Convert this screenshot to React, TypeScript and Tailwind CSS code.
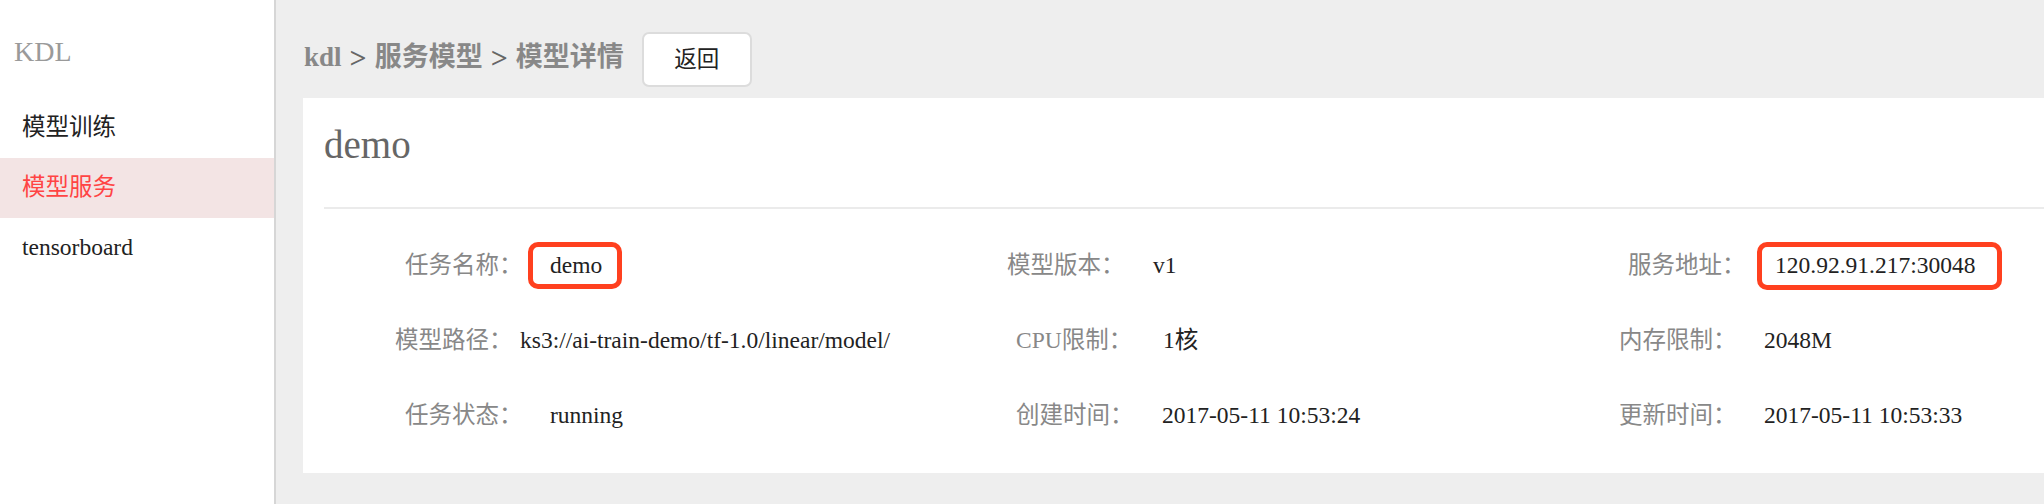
import React from "react";

const FONT = '"Liberation Serif", "Noto Sans CJK SC", serif';

type CellProps = {
  cellClass: string;
  labelClass: string;
  label: string;
  value: string;
  boxClass?: string;
};

function Cell({ cellClass, labelClass, label, value, boxClass }: CellProps) {
  return (
    <div className={cellClass}>
      <span className={labelClass}>{label}</span>
      {boxClass ? (
        <span className={boxClass}>{value}</span>
      ) : (
        <span className="text-[#222] whitespace-nowrap">{value}</span>
      )}
    </div>
  );
}

export default function App() {
  return (
    <div
      className="flex w-[2044px] h-[504px] overflow-hidden bg-[#eeeeee]"
      style={{ fontFamily: FONT }}
    >
      {/* Sidebar */}
      <aside className="w-[276px] shrink-0 h-full bg-white border-r-2 border-[#d6d6d6]">
        <div className="pt-[38px] pl-[14px] text-[28px] leading-none text-[#9a9a9a]">KDL</div>
        <nav className="mt-[32px] text-[23.5px]">
          <div className="h-[60px] flex items-center pl-[22px] text-[#222]">模型训练</div>
          <div className="h-[60px] flex items-center pl-[22px] bg-[#f3e4e4] text-[#ff4444]">模型服务</div>
          <div className="h-[60px] flex items-center pl-[22px] text-[#222]">tensorboard</div>
        </nav>
      </aside>

      {/* Main */}
      <main className="flex-1 min-w-0 pt-[32px] pl-[27px]">
        <div className="flex items-center h-[55px]">
          <div className="ml-[1px] -mt-[5px] flex items-center text-[27px] font-bold text-[#888] whitespace-nowrap">
            <span>kdl</span>
            <span className="mx-[8px] text-[30px] text-[#666]">&gt;</span>
            <span>服务模型</span>
            <span className="mx-[8px] text-[30px] text-[#666]">&gt;</span>
            <span>模型详情</span>
          </div>
          <button className="ml-[18px] w-[110px] h-[55px] bg-white border-2 border-[#dcdcdc] rounded-[7px] text-[22.5px] text-[#222] flex items-center justify-center">
            返回
          </button>
        </div>

        <section className="mt-[11px] bg-white h-[375px]">
          <div className="pl-[21px] pt-[27px] pb-[43px] text-[39px] leading-none text-[#666]">demo</div>
          <div className="ml-[21px] h-[2px] bg-[#ebebeb]" />
          <div className="py-[19px] text-[23.5px]">
            {/* Row 1 */}
            <div className="flex items-center h-[75px]">
              <Cell
                cellClass="w-[647px] shrink-0 flex items-center pl-[102px]"
                labelClass="w-[123px] shrink-0 text-[#888]"
                label="任务名称："
                value="demo"
                boxClass="w-[94px] h-[47px] border-[5px] border-[#ff401f] rounded-[10px] pl-[17px] flex items-center text-[#222]"
              />
              <Cell
                cellClass="w-[600px] shrink-0 flex items-center pl-[57px]"
                labelClass="w-[146px] shrink-0 text-[#888]"
                label="模型版本："
                value="v1"
              />
              <Cell
                cellClass="flex-1 flex items-center pl-[78px]"
                labelClass="w-[129px] shrink-0 text-[#888]"
                label="服务地址："
                value="120.92.91.217:30048"
                boxClass="w-[245px] h-[48px] border-[5px] border-[#ff401f] rounded-[10px] pl-[13px] flex items-center text-[#222] whitespace-nowrap"
              />
            </div>
            {/* Row 2 */}
            <div className="flex items-center h-[75px]">
              <Cell
                cellClass="w-[647px] shrink-0 flex items-center pl-[92px]"
                labelClass="w-[125px] shrink-0 text-[#888]"
                label="模型路径："
                value="ks3://ai-train-demo/tf-1.0/linear/model/"
              />
              <Cell
                cellClass="w-[600px] shrink-0 flex items-center pl-[66px]"
                labelClass="w-[147px] shrink-0 text-[#888]"
                label="CPU限制："
                value="1核"
              />
              <Cell
                cellClass="flex-1 flex items-center pl-[69px]"
                labelClass="w-[145px] shrink-0 text-[#888]"
                label="内存限制："
                value="2048M"
              />
            </div>
            {/* Row 3 */}
            <div className="flex items-center h-[75px]">
              <Cell
                cellClass="w-[647px] shrink-0 flex items-center pl-[102px]"
                labelClass="w-[145px] shrink-0 text-[#888]"
                label="任务状态："
                value="running"
              />
              <Cell
                cellClass="w-[600px] shrink-0 flex items-center pl-[66px]"
                labelClass="w-[146px] shrink-0 text-[#888]"
                label="创建时间："
                value="2017-05-11 10:53:24"
              />
              <Cell
                cellClass="flex-1 flex items-center pl-[69px]"
                labelClass="w-[145px] shrink-0 text-[#888]"
                label="更新时间："
                value="2017-05-11 10:53:33"
              />
            </div>
          </div>
        </section>
      </main>
    </div>
  );
}
